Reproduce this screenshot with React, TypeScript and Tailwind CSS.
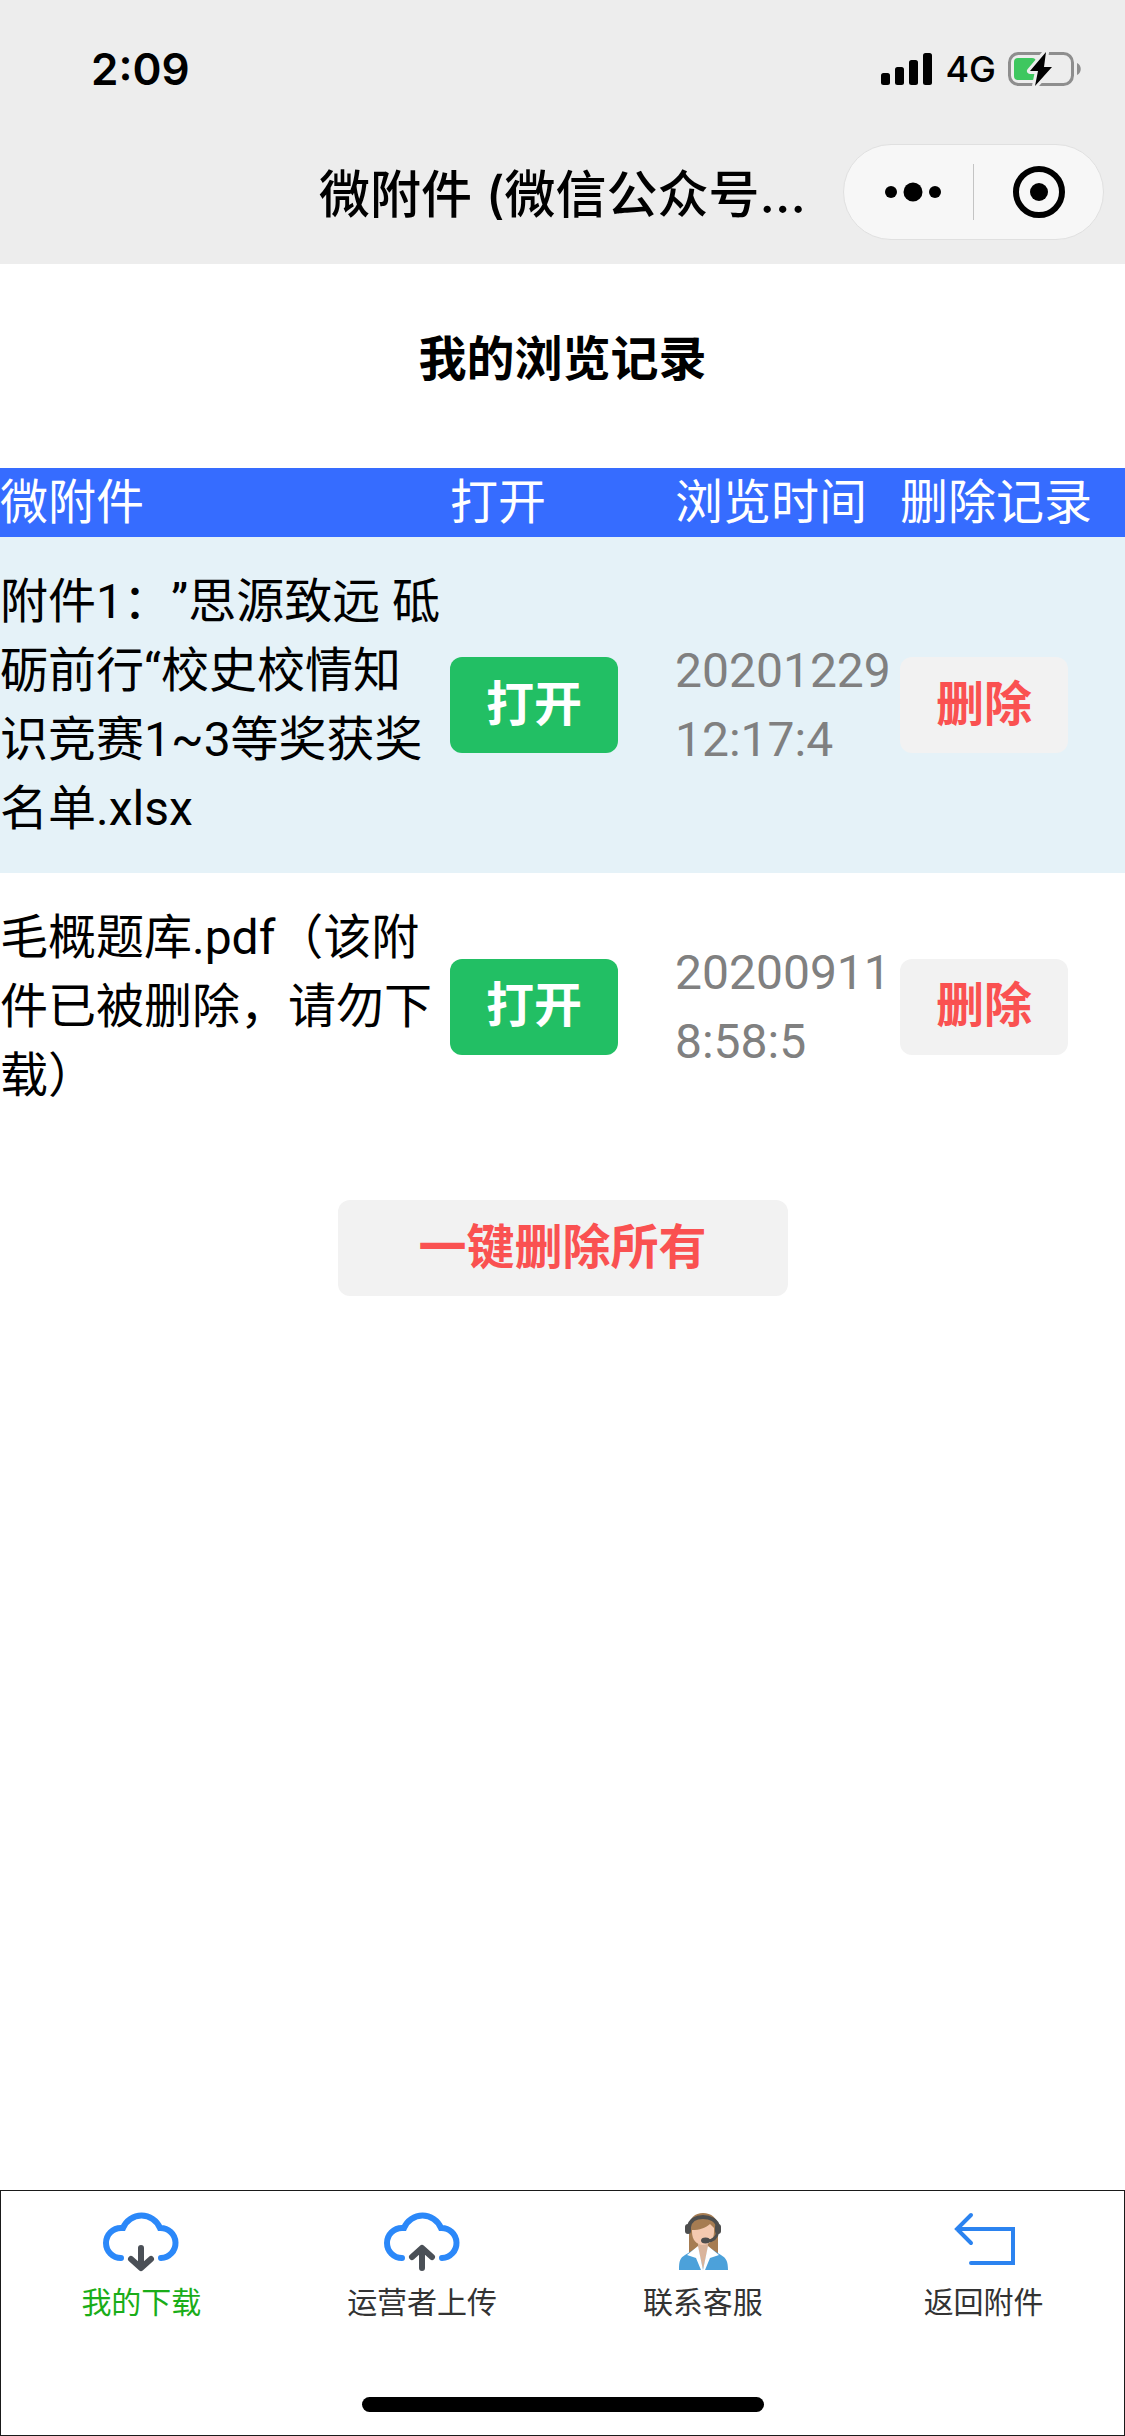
import type { ReactNode } from "react";

interface HistoryRecord {
  name: string;
  date: string;
  time: string;
}

interface Tab {
  label: string;
  href: string;
  icon: ReactNode;
  active?: boolean;
}

const records: HistoryRecord[] = [
  {
    name: "附件1：”思源致远 砥砺前行“校史校情知识竞赛1~3等奖获奖名单.xlsx",
    date: "20201229",
    time: "12:17:4",
  },
  {
    name: "毛概题库.pdf（该附件已被删除，请勿下载）",
    date: "20200911",
    time: "8:58:5",
  },
];

function CloudIcon({ arrow }: { arrow: "down" | "up" }) {
  return (
    <svg className="size-[81px]" viewBox="0 0 81 81" fill="none" strokeLinecap="round" aria-hidden="true">
      <path
        d="M20 57A15 15 0 0 1 20 27H22A20 20 0 0 1 59 27A15 15 0 0 1 60 57"
        stroke="#2b88f9"
        strokeWidth="6"
      />
      <path
        d={arrow === "down" ? "M40 47V66M30 58L40 67L50 58" : "M40 67V48M30 56L40 47L50 56"}
        stroke="#4b5057"
        strokeWidth="6"
        strokeLinejoin="round"
      />
    </svg>
  );
}

function ServiceIcon() {
  return (
    <svg className="size-[81px]" viewBox="0 0 81 81" fill="none" aria-hidden="true">
      <path d="M27 52V27C27 17 33 12 41 12S56 17 56 27V52Z" fill="#a67c52" />
      <path d="M17 69C17 60 18 57 23 54L36 46H46L59 54C64 57 66 60 66 69Z" fill="#4ca1da" />
      <path d="M36 40H46V47L41 69L36 47Z" fill="#d9b49c" />
      <path d="M30 29C38 29 43 27 48 23L52 27V31C52 39 47 44 41 44S30 39 30 31Z" fill="#f4c9b0" />
      <path d="M36 45L25 54L34 57L39 69H41ZM46 45L57 54L48 57L43 69H41Z" fill="#fff" />
      <path d="M27 26C28 19 34 16 41 16S55 19 56 26" stroke="#4d4d4d" strokeWidth="4" />
      <path d="M56 30C55 36 52 40 45 40" stroke="#4d4d4d" strokeWidth="3" />
      <rect x="23" y="23" width="6" height="10" rx="3" fill="#4d4d4d" />
      <rect x="53" y="23" width="6" height="10" rx="3" fill="#4d4d4d" />
      <ellipse cx="43.500" cy="39.500" rx="4.500" ry="3" fill="#4d4d4d" />
    </svg>
  );
}

function BackIcon() {
  return (
    <svg
      className="size-[81px]"
      viewBox="0 0 81 81"
      fill="none"
      stroke="#2b83f0"
      strokeWidth="4"
      strokeLinecap="round"
      aria-hidden="true"
    >
      <path d="M28 14L14 28L28 42M14 28H70V62H28" />
    </svg>
  );
}

const tabs: Tab[] = [
  { label: "我的下载", href: "#downloads", icon: <CloudIcon arrow="down" />, active: true },
  { label: "运营者上传", href: "#upload", icon: <CloudIcon arrow="up" /> },
  { label: "联系客服", href: "#service", icon: <ServiceIcon /> },
  { label: "返回附件", href: "#back", icon: <BackIcon /> },
];

function StatusBar() {
  return (
    <div className="flex h-[132px] items-center justify-between pt-1.5 pr-[43px] pl-[91px]">
      <span className="text-[44px] font-semibold">2:09</span>
      <div className="flex items-center gap-3">
        <svg className="h-9 w-[52px]" viewBox="0 0 52 36" aria-hidden="true">
          <rect x="0" y="22" width="9" height="12" rx="2.500" />
          <rect x="14" y="16" width="9" height="18" rx="2.500" />
          <rect x="28" y="9" width="9" height="25" rx="2.500" />
          <rect x="42" y="2" width="9" height="32" rx="2.500" />
        </svg>
        <span className="text-[36px] font-medium">4G</span>
        <svg className="h-9 w-[74px]" viewBox="0 0 74 36" fill="none" aria-hidden="true">
          <rect x="1.500" y="2.500" width="63" height="31" rx="9" stroke="#8e8e8e" strokeWidth="3" />
          <path d="M69 12C74 14 74 22 69 24Z" fill="#8e8e8e" />
          <rect x="6" y="7" width="22" height="22" rx="4" fill="#3ec75f" />
          <path
            d="M38 1L22 20H30L27 35L44 16H36Z"
            fill="#000"
            stroke="#ededed"
            strokeWidth="6"
            strokeLinejoin="round"
            paintOrder="stroke"
          />
        </svg>
      </div>
    </div>
  );
}

function NavigationBar() {
  return (
    <div className="relative flex h-[132px] items-center justify-center">
      <h1 className="pb-1.5 text-[51px] leading-[60px] font-medium">微附件 (微信公众号…</h1>
      {/* Mini program capsule */}
      <div className="absolute top-3 right-[21px] flex h-24 w-[261px] items-center rounded-full border border-[#e0e0e0] bg-[#f7f7f7]">
        <button type="button" aria-label="更多" className="flex w-[129px] justify-center pl-2">
          <svg className="h-5 w-14" viewBox="0 0 56 20" aria-hidden="true">
            <circle cx="6" cy="10" r="6" />
            <circle cx="28" cy="10" r="9.500" />
            <circle cx="50" cy="10" r="6" />
          </svg>
        </button>
        <span className="h-14 w-px bg-[#c4c4c4]" />
        <button type="button" aria-label="关闭" className="flex flex-1 justify-center">
          <svg className="size-[54px]" viewBox="0 0 54 54" fill="none" aria-hidden="true">
            <circle cx="27" cy="27" r="23" stroke="#000" strokeWidth="6" />
            <circle cx="27" cy="27" r="9" fill="#000" />
          </svg>
        </button>
      </div>
    </div>
  );
}

export default function App() {
  return (
    <div className="flex min-h-screen flex-col bg-white font-['Roboto','Noto_Sans_CJK_SC',sans-serif] text-black">
      <header className="bg-[#ededed] font-['Inter','Noto_Sans_CJK_SC',sans-serif]">
        <StatusBar />
        <NavigationBar />
      </header>

      <main className="flex-1 text-[48px] leading-[69px]">
        <h2 className="pt-[61px] pb-[74px] text-center font-bold">我的浏览记录</h2>

        <table className="w-full table-fixed text-left">
          <thead className="bg-[#366cff] text-white">
            <tr>
              <th className="w-2/5 p-0 font-normal">微附件</th>
              <th className="w-1/5 p-0 font-normal">打开</th>
              <th className="w-1/5 p-0 font-normal">浏览时间</th>
              <th className="w-1/5 p-0 font-normal">删除记录</th>
            </tr>
          </thead>
          <tbody>
            {records.map((record) => (
              <tr key={record.date} className="odd:bg-[#e5f2f8]">
                <td className="py-[30px] pr-1 pl-0 [text-spacing-trim:space-all]">{record.name}</td>
                <td className="p-0">
                  <button type="button" className="block h-24 w-[168px] rounded-xl bg-[#22bf64] pb-0.5 font-bold text-white">
                    打开
                  </button>
                </td>
                <td className="p-0 text-[#808080]">
                  {record.date} {record.time}
                </td>
                <td className="p-0">
                  <button type="button" className="block h-24 w-[168px] rounded-xl bg-[#f2f2f2] pb-0.5 font-bold text-[#fa5151]">
                    删除
                  </button>
                </td>
              </tr>
            ))}
          </tbody>
        </table>

        <button
          type="button"
          className="mx-auto mt-[60px] block h-24 w-2/5 rounded-xl bg-[#f2f2f2] pb-0.5 font-bold text-[#fa5151]"
        >
          一键删除所有
        </button>
      </main>

      <footer className="border border-[#1a1a1a] pt-[10px] pb-[23px]">
        <nav className="grid grid-cols-4">
          {tabs.map((tab) => (
            <a
              key={tab.label}
              href={tab.href}
              className={`flex flex-col items-center text-[30px] leading-[42px] ${tab.active ? "text-[#1aad19]" : "text-[#333333]"}`}
            >
              {tab.icon}
              {tab.label}
            </a>
          ))}
        </nav>
        {/* Home indicator */}
        <div className="mx-auto mt-[73px] h-[15px] w-[402px] rounded-full bg-black" />
      </footer>
    </div>
  );
}
